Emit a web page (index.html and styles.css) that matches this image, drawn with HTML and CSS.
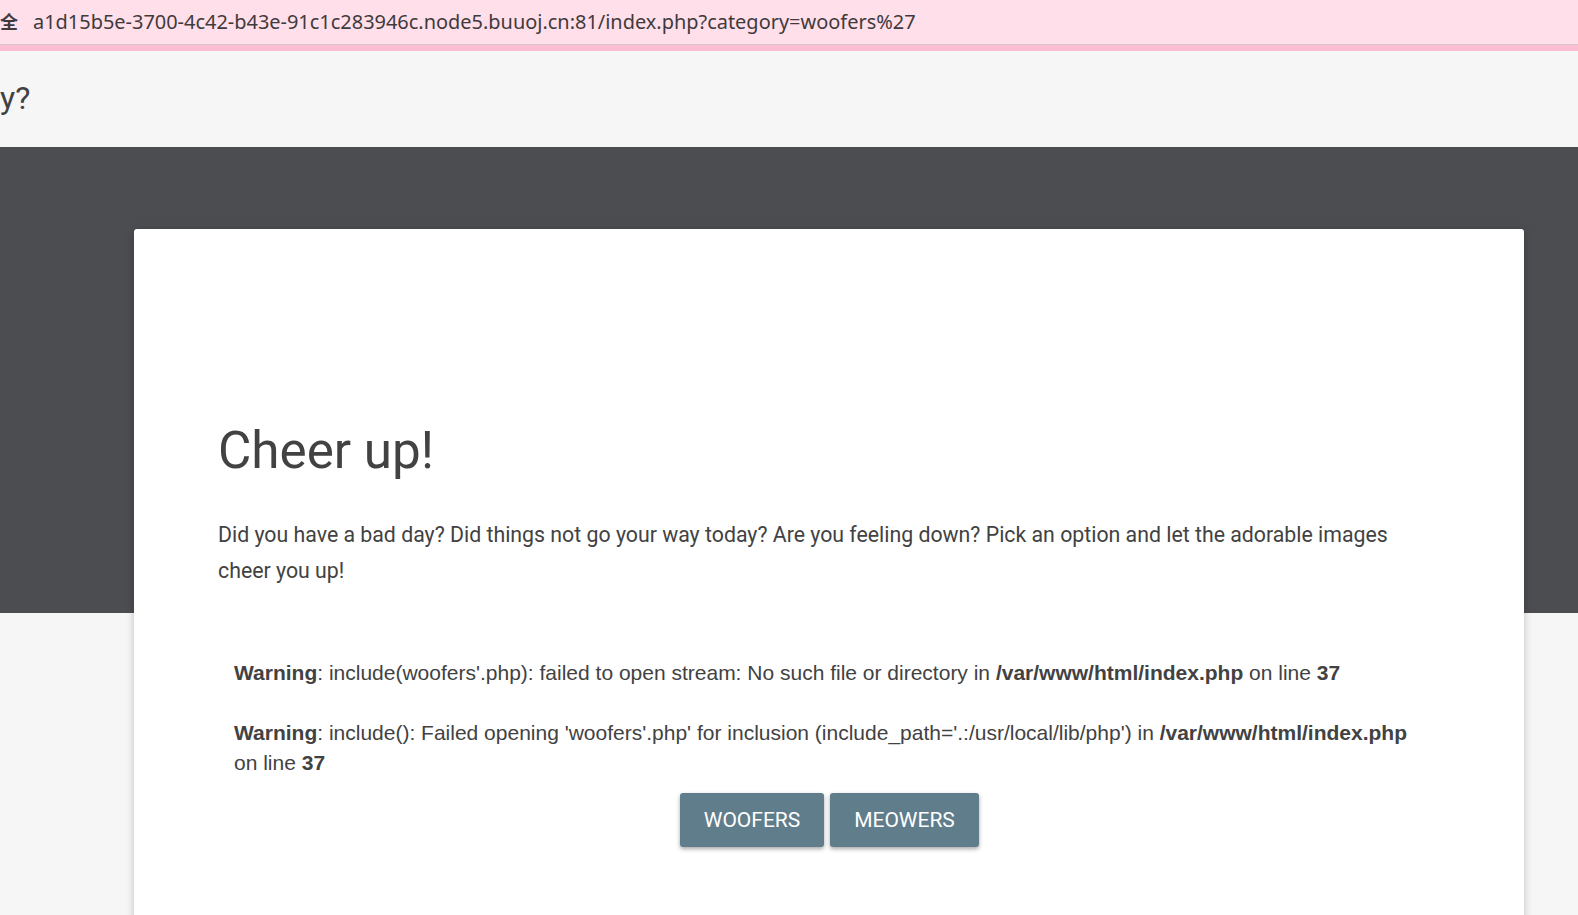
FILE: index.html
```html
<!DOCTYPE html>
<html lang="en">
<head>
<meta charset="utf-8">
<title>Cheer up!</title>
<link rel="stylesheet" href="styles.css">
</head>
<body>
<div class="urlbar"><span class="lock">全</span><span class="url">a1d15b5e-3700-4c42-b43e-91c1c283946c.node5.buuoj.cn:81/index.php?category=woofers%27</span></div>
<header class="title"><span>y?</span></header>
<div class="hero"></div>
<main class="card">
<h1 class="heading">Cheer up!</h1>
<p class="intro">Did you have a bad day? Did things not go your way today? Are you feeling down? Pick an option and let the adorable images cheer you up!</p>
<div class="output">
<p class="warning"><b>Warning</b>: include(woofers'.php): failed to open stream: No such file or directory in <b>/var/www/html/index.php</b> on line <b>37</b></p>
<p class="warning"><b>Warning</b>: include(): Failed opening 'woofers'.php' for inclusion (include_path='.:/usr/local/lib/php') in <b>/var/www/html/index.php</b> on line <b>37</b></p>
</div>
<div class="actions">
<button class="btn btn-woof">WOOFERS</button>
<button class="btn btn-meow">MEOWERS</button>
</div>
</main>
</body>
</html>
```
FILE: styles.css
```css
html, body {
  margin: 0;
  height: 915px;
  overflow: hidden;
  background: #f6f6f6;
  color: #424242;
  font-family: Roboto, sans-serif;
}
.urlbar {
  height: 45px;
  box-sizing: border-box;
  padding-bottom: 2px;
  background: #ffdfe9;
  border-bottom: 1px solid #d5c3ca;
  box-shadow: 0 6px 0 #fdbdd2;
  display: flex;
  align-items: center;
  font-size: 20px;
  position: relative;
}
.lock {
  font-family: "Noto Sans CJK SC", sans-serif;
  font-size: 18px;
  width: 33px;
  font-weight: 700;
  color: #3f3a3c;
}
.url {
  font-family: "Noto Sans", sans-serif;
  font-size: 19.95px;
  color: #3f3a3c;
  white-space: nowrap;
}
.title {
  height: 102px;
  padding-top: 3px;
  box-sizing: border-box;
  display: flex;
  align-items: center;
  font-size: 32px;
  color: #424242;
}
.hero {
  height: 466px;
  background: #4b4d50;
}
.card {
  background: #fff;
  margin: -384px 54px 0 134px;
  height: 800px;
  box-sizing: border-box;
  border-radius: 3px;
  padding: 194px 85px 0 84px;
  position: relative;
  box-shadow: 0 2px 8px rgba(0, 0, 0, 0.22);
}
.heading {
  margin: 0;
  font-size: 51.2px;
  font-weight: 400;
  line-height: 56px;
  color: #424242;
}
.intro {
  margin: 38px 0 0;
  font-size: 21.3px;
  line-height: 36px;
}
.output {
  margin: 69px 0 0;
  padding: 0 14px 0 16px;
  font-family: "Liberation Sans", Arial, sans-serif;
  font-size: 21px;
  line-height: 30px;
}
.warning {
  margin: 0 0 30px;
}
.warning:last-child {
  margin: 0;
}
.actions {
  display: flex;
  justify-content: center;
  gap: 6px;
  margin-top: 15px;
  padding-left: 2px;
}
.btn {
  height: 54px;
  border: 0;
  border-radius: 3px;
  background: #607d8b;
  color: #fff;
  font-family: Roboto, sans-serif;
  font-size: 21px;
  font-weight: 400;
  box-shadow: 0 2px 4px rgba(0, 0, 0, 0.35);
  padding: 0;
}
.btn-woof { width: 144px; }
.btn-meow { width: 149px; }
```
